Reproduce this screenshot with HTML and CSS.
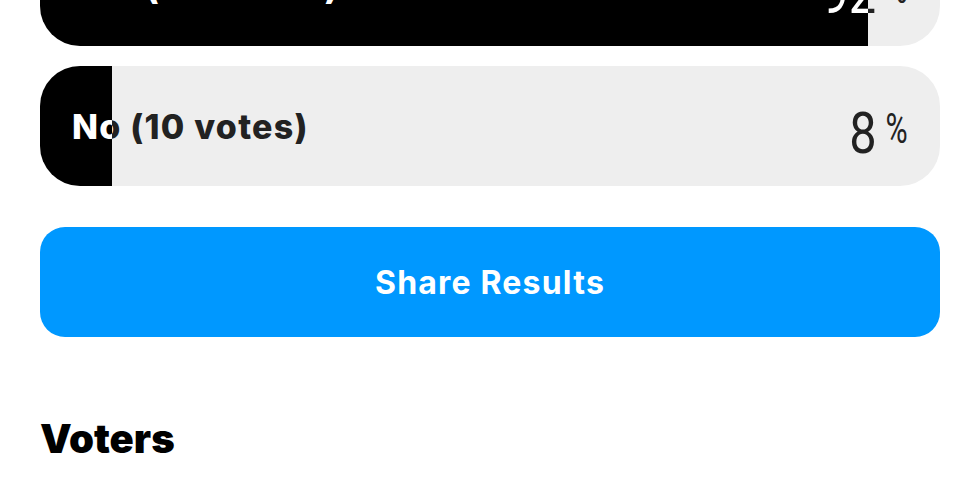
FILE: index.html
```html
<!DOCTYPE html>
<html lang="en">
<head>
<meta charset="utf-8">
<title>Poll results</title>
<link rel="stylesheet" href="styles.css">
</head>
<body>
<main class="page">
  <section class="results">
    <div class="option">
      <div class="option-row">
        <span class="label">Yes (115 votes)</span>
        <span class="pct"><span class="num">92</span><span class="sign">%</span></span>
      </div>
      <div class="option-row fill" style="--pct: 92%">
        <span class="label">Yes (115 votes)</span>
        <span class="pct"><span class="num">92</span><span class="sign">%</span></span>
      </div>
    </div>
    <div class="option">
      <div class="option-row">
        <span class="label">No (10 votes)</span>
        <span class="pct"><span class="num">8</span><span class="sign">%</span></span>
      </div>
      <div class="option-row fill" style="--pct: 8%">
        <span class="label">No (10 votes)</span>
        <span class="pct"><span class="num">8</span><span class="sign">%</span></span>
      </div>
    </div>
  </section>
  <button class="share" type="button">Share Results</button>
  <h2 class="voters">Voters</h2>
</main>
</body>
</html>
```

FILE: styles.css
```css
* { box-sizing: border-box; }
html, body { margin: 0; padding: 0; background: #fff; }
body { font-family: Inter, "Noto Sans", sans-serif; color: #222; overflow: hidden; }

.page {
  padding: 0 40px;
  display: flex;
  flex-direction: column;
}

.results {
  display: flex;
  flex-direction: column;
  gap: 20px;
  margin-top: -74px;
}

.option {
  position: relative;
  height: 120px;
  border-radius: 40px;
  background: #eeeeee;
  overflow: hidden;
}

.option-row {
  height: 100%;
  display: flex;
  align-items: center;
  justify-content: space-between;
  padding: 0 32px;
}

.fill {
  position: absolute;
  inset: 0;
  background: #000;
  color: #fff;
  clip-path: inset(0 calc(100% - var(--pct)) 0 0);
}

.label {
  font-size: 34px;
  font-weight: 800;
  letter-spacing: 1.25px;
}

.pct {
  display: flex;
  align-items: flex-start;
  margin-top: 14px;
}

.num {
  display: inline-block;
  font-family: Roboto, sans-serif;
  font-weight: 400;
  font-size: 58px;
  line-height: 1;
  transform: scaleX(0.84);
  transform-origin: right center;
}

.sign {
  display: inline-block;
  font-family: Roboto, sans-serif;
  font-weight: 400;
  font-size: 42px;
  line-height: 1;
  margin-left: 1px;
  margin-top: 4px;
  transform: scaleX(0.72);
  transform-origin: right center;
}

.share {
  margin-top: 41px;
  height: 110px;
  border: 0;
  border-radius: 25px;
  background: #0098ff;
  color: #fff;
  font-family: Inter, sans-serif;
  font-size: 32px;
  font-weight: 700;
  letter-spacing: 1.2px;
}

.voters {
  margin: 78px 0 0;
  font-family: Inter, sans-serif;
  font-size: 40px;
  line-height: 48px;
  font-weight: 900;
  color: #000;
}
```
